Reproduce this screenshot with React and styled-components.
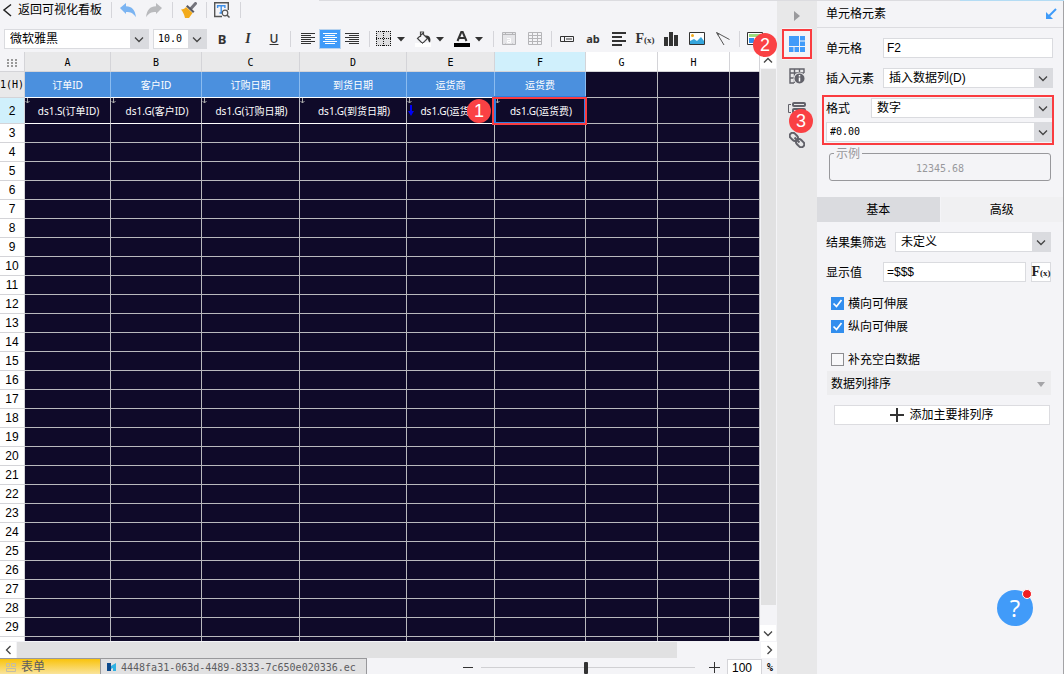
import React from "react";
import styled, { createGlobalStyle, css } from "styled-components";

const ui = `"Liberation Sans", "Noto Sans CJK SC", sans-serif`;
const mono = `"DejaVu Sans Mono", "Noto Sans CJK SC", monospace`;
const cellFont = `"Noto Sans", "Noto Sans CJK SC", sans-serif`;

const Global = createGlobalStyle`
  *, *::before, *::after { box-sizing: border-box; }
  body { margin: 0; background: #f4f4f7; color: #000; font: 12px/18px ${ui}; }
  button, input, select { font: inherit; color: inherit; margin: 0; }
  button { border: 0; padding: 0; background: none; }
  svg { display: block; }
`;

const App_ = styled.div`
  position: relative;
  display: flex;
  height: 100vh;
  overflow: hidden;
  &::before {
    content: "";
    position: absolute;
    z-index: 5;
    top: 0;
    right: 0;
    left: 30%;
    height: 1px;
    background: linear-gradient(to right, #dcdce0 86%, #b4dcf4 86%);
  }
`;
const Main = styled.main`
  flex: 1;
  min-width: 0;
  display: flex;
  flex-direction: column;
`;

/* Toolbars */
const TopBar = styled.header`
  display: flex;
  align-items: center;
  height: 20px;
  margin-bottom: 6px;
  flex: none;
`;
const Back = styled.button`
  display: flex;
  align-items: center;
  gap: 6px;
  padding: 0 6px 0 2px;
`;
const ToolBar = styled.div`
  display: flex;
  align-items: center;
  height: 26px;
  flex: none;
  padding-left: 4px;
  overflow: hidden;
`;
const Divider = styled.i`
  flex: none;
  width: 1px;
  height: 16px;
  margin: 0 2px 0 3px;
  background: #d5d5da;
`;
const Group = styled.div`
  display: flex;
  align-items: center;
  flex: none;
  padding: ${(p) => p.$pad || "0"};
`;
const Tool = styled.button`
  display: flex;
  align-items: center;
  justify-content: center;
  flex: none;
  width: ${(p) => p.$w || 26}px;
  height: 20px;
  color: #333;
  font: ${(p) => p.$font || "inherit"};
  ${(p) => p.$active && css`
    background: #3f9bf9;
    border: 1px solid #b9d3ee;
    color: #fff;
  `}
`;
const SplitTool = styled.button`
  display: flex;
  align-items: center;
  gap: 5px;
  flex: none;
  width: 39px;
  height: 20px;
  padding-left: 3px;
`;

/* Form parts */
const SelectBox = styled.span`
  position: relative;
  display: block;
  flex: ${(p) => (p.$w ? "none" : "1")};
  width: ${(p) => (p.$w ? p.$w + "px" : "auto")};
  min-width: 0;
  height: 20px;
  background: #dadbdf;
  select {
    appearance: none;
    display: block;
    width: 100%;
    height: 20px;
    padding: 0 22px 0 ${(p) => p.$indent || 5}px;
    border: 1px solid #dadbdf;
    border-radius: 0;
    background: linear-gradient(#fff, #fff) no-repeat 0 0 / calc(100% - 18px) 100%;
    background-color: #dadbdf;
    font: ${(p) => (p.$mono ? `10px/18px ${mono}` : "inherit")};
  }
  svg {
    position: absolute;
    top: 7px;
    right: 5px;
    pointer-events: none;
  }
`;
const TextInput = styled.input`
  flex: 1;
  min-width: 0;
  height: 20px;
  padding: 0 3px;
  border: 1px solid #dadbdf;
  background: #fff;
`;

/* Spreadsheet */
const SheetArea = styled.div`
  flex: 1;
  min-height: 0;
  display: flex;
`;
const SheetView = styled.div`
  flex: 1;
  min-width: 0;
  overflow: hidden;
  background: #0f0a29;
`;
const Sheet = styled.table`
  width: 100%;
  table-layout: fixed;
  border-collapse: separate;
  border-spacing: 0;
`;
const ColHead = styled.th`
  height: 20px;
  padding: 2px 0 0;
  border-right: 1px solid #d4d4d8;
  border-bottom: 1px solid #d4d4d8;
  background: ${(p) => p.$bg || "#e9e9ea"};
  font: 10px/17px ${mono};
`;
const Dots = styled.div`
  display: flex;
  justify-content: center;
`;
const RowHead = styled.th`
  height: ${(p) => p.$h || 19}px;
  padding: 0;
  border-right: 1px solid #d4d4d8;
  border-bottom: 1px solid #d4d4d8;
  background: ${(p) => p.$bg || "#fff"};
  font: ${(p) => (p.$mono ? `10px/18px ${mono}` : `12px/18px ${ui}`)};
  white-space: nowrap;
`;
const Cell = styled.td`
  position: relative;
  height: ${(p) => p.$h || 19}px;
  padding: 0;
  border-right: 1px solid #b9b9bd;
  border-bottom: 1px solid #b9b9bd;
  color: #fff;
  text-align: center;
  white-space: nowrap;
  font: 10px/18px ${cellFont};
  ${(p) => p.$head && css`
    background: #4b90de;
    border-right-color: #8bbcf0;
    border-bottom-color: #fff;
  `}
  ${(p) => p.$formula && css`
    padding-left: 2px;
    border-bottom-color: #fff;
  `}
`;
const Anchor = styled.svg`
  position: absolute;
  top: 0;
  left: 0;
`;
const BlueAnchor = styled.svg`
  position: absolute;
  top: 7px;
  left: 0;
`;
const Selection = styled.span`
  position: absolute;
  inset: -2px -1px -1px -1px;
  border: 2px solid #2f7fe0;
`;
const Mark = styled.span`
  position: absolute;
  z-index: 2;
  inset: ${(p) => p.$inset};
  border: 2px solid #fa3c40;
  pointer-events: none;
`;
const Badge = styled.span`
  position: absolute;
  z-index: 3;
  top: ${(p) => p.$top}px;
  left: ${(p) => p.$left}px;
  width: 24px;
  height: 24px;
  border-radius: 50%;
  background: #fa4144;
  color: #fff;
  text-align: center;
  font: 18px/24px "Liberation Sans", sans-serif;
`;

/* Scroll bars and status line */
const VScroll = styled.div`
  flex: none;
  width: 17px;
  display: flex;
  flex-direction: column;
`;
const HScroll = styled.div`
  flex: none;
  height: 17px;
  display: flex;
  padding-top: 1px;
`;
const ScrollButton = styled.button`
  display: flex;
  align-items: center;
  justify-content: center;
  flex: none;
  width: 16px;
  height: 16px;
  background: #fff;
`;
const Thumb = styled.div`
  flex: ${(p) => p.$grow};
  margin: ${(p) => p.$margin || 0};
  background: #e1e1e2;
`;
const Rest = styled.div`
  flex: ${(p) => p.$grow};
`;
const StatusBar = styled.footer`
  flex: none;
  display: flex;
  height: 16px;
  overflow: hidden;
`;
const SheetTab = styled.button`
  display: flex;
  align-items: center;
  gap: 5px;
  flex: none;
  height: 17px;
  padding: 0 ${(p) => (p.$active ? 55 : 10)}px 0 6px;
  border: solid #98989b;
  border-width: 1px 1px 0 0;
  background: ${(p) => (p.$active ? "linear-gradient(#f9c30c, #fae6a4)" : "#e1e1e2")};
  color: #5c5c5f;
  font: ${(p) => (p.$active ? `12px/15px ${ui}` : `10px/15px ${mono}`)};
`;
const Zoom = styled.div`
  flex: 1;
  display: flex;
  align-items: center;
  justify-content: flex-end;
  padding: 3px 4px 0 0;
`;
const ZoomRange = styled.input`
  appearance: none;
  width: 214px;
  height: 12px;
  margin: 0 8px;
  background: linear-gradient(#d0d0d3, #d0d0d3) no-repeat center / 100% 1px;
  &::-webkit-slider-thumb {
    appearance: none;
    width: 4px;
    height: 12px;
    border-radius: 1px;
    background: #333;
  }
`;
const ZoomInput = styled.input`
  width: 35px;
  height: 18px;
  margin: 0 5px 0 7px;
  padding: 0 4px;
  border: 1px solid #d4d4d8;
  background: #fff;
`;
const Percent = styled.label`
  font: bold 10px/12px ${mono};
`;

/* Icon strip */
const Strip = styled.nav`
  flex: none;
  width: 40px;
  display: flex;
  flex-direction: column;
  align-items: center;
  padding-top: 3px;
  background: #e8e8e9;
`;
const StripButton = styled.button`
  position: relative;
  display: flex;
  align-items: center;
  justify-content: center;
  flex: none;
  width: 30px;
  height: ${(p) => p.$h || 32}px;
  background: ${(p) => (p.$active ? "#f4f4f7" : "none")};
`;

/* Property panel */
const Panel = styled.aside`
  position: relative;
  flex: none;
  width: 247px;
  background: #f4f4f7;
  border-right: 1px solid #a3a3a6;
`;
const PanelTitle = styled.h1`
  display: flex;
  align-items: center;
  justify-content: space-between;
  height: 28px;
  margin: 0 0 10px;
  padding: 1px 6px 0 9px;
  border-bottom: 1px solid #dcdce0;
  font: 12px/18px ${ui};
`;
const Field = styled.div`
  display: flex;
  align-items: center;
  height: 20px;
  margin: 0 ${(p) => p.$right || 10}px 10px 9px;
`;
const FieldLabel = styled.label`
  flex: none;
  width: ${(p) => p.$w || 57}px;
  padding-top: 2px;
  white-space: nowrap;
`;
const FormatGroup = styled.div`
  position: relative;
  display: grid;
  gap: 4px;
  margin-bottom: 5px;
`;
const FormatRow = styled.div`
  display: flex;
  align-items: center;
  height: 20px;
  margin: 0 10px 0 9px;
`;
const Sample = styled.fieldset`
  height: 34px;
  margin: 0 12px 16px;
  padding: 0;
  border: 1px solid #98989c;
  border-radius: 3px;
  color: #98989c;
  text-align: center;
  font: 10px/18px ${mono};
  legend {
    height: 13px;
    margin-left: 4px;
    padding: 0 2px;
    text-align: left;
    font: 12px/14px ${ui};
  }
`;
const Tabs = styled.div`
  display: flex;
  gap: 1px;
  margin-bottom: 10px;
`;
const Tab = styled.button`
  flex: 1;
  height: 25px;
  background: ${(p) => (p.$active ? "#dadbdf" : "#f0f0f2")};
`;
const FxButton = styled.button`
  display: flex;
  align-items: center;
  justify-content: center;
  flex: none;
  width: 20px;
  height: 20px;
  margin-left: 5px;
  border: 1px solid #dadbdf;
  background: #fff;
  color: #222;
`;
const Check = styled.label`
  display: flex;
  align-items: center;
  gap: 4px;
  height: 23px;
  margin-left: 14px;
  input {
    appearance: none;
    width: 13px;
    height: 13px;
    border: 1px solid #8c8c90;
    background: #f8f8fa;
  }
  input:checked {
    border-color: #328eee;
    background: #328eee
      url("data:image/svg+xml,%3Csvg xmlns='http://www.w3.org/2000/svg' viewBox='0 0 11 11'%3E%3Cpath d='M1.500 5.500l3 3 5-6.500' fill='none' stroke='white' stroke-width='1.700'/%3E%3C/svg%3E");
  }
`;
const Checks = styled.div`
  margin-bottom: 10px;
`;
const Section = styled.button`
  display: flex;
  align-items: center;
  justify-content: space-between;
  width: calc(100% - 22px);
  height: 24px;
  margin: 0 12px 10px 10px;
  padding: 2px 6px 0 4px;
  background: #ededef;
`;
const AddButton = styled.button`
  display: flex;
  align-items: center;
  justify-content: center;
  gap: 5px;
  width: calc(100% - 30px);
  height: 20px;
  margin-left: 17px;
  border: 1px solid #dcdce0;
  background: #fff;
`;
const Help = styled.button`
  position: absolute;
  right: 30px;
  bottom: 48px;
  width: 36px;
  height: 36px;
  border-radius: 50%;
  background: #419bf9;
  color: #fff;
  font: 24px/36px "Open Sans", sans-serif;
  &::after {
    content: "";
    position: absolute;
    top: -1px;
    right: 1px;
    width: 10px;
    height: 10px;
    border: 1px solid #fff;
    border-radius: 50%;
    background: #f01d22;
  }
`;

/* Icons */
const Svg = ({ w = 16, h = 16, children, ...rest }) => (
  <svg width={w} height={h} viewBox={`0 0 ${w} ${h}`} fill="none" aria-hidden="true" {...rest}>{children}</svg>
);
const chevrons = {
  down: { w: 10, h: 7, d: "M1 1.5l4 4 4-4" },
  up: { w: 10, h: 7, d: "M1 5.5l4-4 4 4" },
  left: { w: 7, h: 10, d: "M5.5 1l-4 4 4 4" },
  right: { w: 7, h: 10, d: "M1.5 1l4 4-4 4" },
};
const Chevron = ({ dir = "down" }) => {
  const { w, h, d } = chevrons[dir];
  return <Svg w={w} h={h}><path d={d} stroke="#444" strokeWidth="1.3" /></Svg>;
};
const Caret = () => <Svg w={8} h={5}><path d="M0 0h8L4 4.5z" fill="#333" /></Svg>;
const Lines = ({ rows }) => (
  <Svg w={16} h={14}>
    {rows.map(([x1, x2], i) => <path key={i} d={`M${x1} ${1.5 + i * 2}H${x2}`} stroke="currentColor" />)}
  </Svg>
);
const alignLeft = [[1, 15], [1, 11], [1, 15], [1, 11], [1, 15], [1, 11]];
const alignCenter = [[1, 15], [3, 13], [1, 15], [3, 13], [1, 15], [3, 13]];
const alignRight = [[1, 15], [5, 15], [1, 15], [5, 15], [1, 15], [5, 15]];
const FxText = styled.span`
  font: bold 14px/18px "Liberation Serif", serif;
  small { font: bold 9px/18px "Liberation Serif", serif; }
`;
const Fx = () => <FxText>F<small>(x)</small></FxText>;

const Select = ({ label, id, value, ...rest }) => (
  <SelectBox {...rest}>
    <select id={id} aria-label={label} defaultValue={value}><option>{value}</option></select>
    <Chevron />
  </SelectBox>
);

const columns = [
  { name: "A", width: 86, title: "订单ID", formula: "ds1.S(订单ID)" },
  { name: "B", width: 91, title: "客户ID", formula: "ds1.G(客户ID)" },
  { name: "C", width: 98, title: "订购日期", formula: "ds1.G(订购日期)" },
  { name: "D", width: 107, title: "到货日期", formula: "ds1.G(到货日期)" },
  { name: "E", width: 88, title: "运货商", formula: "ds1.G(运货商)" },
  { name: "F", width: 91, title: "运货费", formula: "ds1.G(运货费)" },
  { name: "G", width: 72 },
  { name: "H", width: 72 },
  { name: "" },
];
const lastRow = 29;
const rows = Array.from({ length: lastRow - 1 }, (_, i) => i + 3);

const Spreadsheet = () => (
  <Sheet>
    <colgroup>
      <col width="25" />
      {columns.map((c) => <col key={c.name} width={c.width} />)}
    </colgroup>
    <thead>
      <tr>
        <ColHead $bg="#f4f4f7">
          <Dots>
            <Svg w={10} h={8}>
              {[0, 4, 8].flatMap((x) => [0, 3, 6].map((y) => <rect key={`${x}-${y}`} x={x} y={y} width="2" height="2" fill="#999" />))}
            </Svg>
          </Dots>
        </ColHead>
        {columns.map((c) => (
          <ColHead key={c.name} $bg={c.name === "F" ? "#d0f0fc" : c.title ? "#e9e9ea" : "#fff"}>{c.name}</ColHead>
        ))}
      </tr>
    </thead>
    <tbody>
      <tr>
        <RowHead $h={26} $bg="#e9e9ea" $mono>1(H)</RowHead>
        {columns.map((c) => <Cell key={c.name} $h={26} $head={Boolean(c.title)}>{c.title}</Cell>)}
      </tr>
      <tr>
        <RowHead $h={26} $bg="#d0f0fc">2</RowHead>
        {columns.map((c) => (
          <Cell key={c.name} $h={26} $formula={Boolean(c.formula)}>
            {c.formula}
            {c.formula && (
              <Anchor width="5" height="6" viewBox="0 0 5 6" fill="none" stroke="#aaa"><path d="M2.5 0v5M.5 3l2 2 2-2" /></Anchor>
            )}
            {c.name === "E" && (
              <BlueAnchor width="7" height="12" viewBox="0 0 7 12"><path d="M3 0h2v6h2L4 11 1 6h2z" fill="#0000f5" /></BlueAnchor>
            )}
            {c.name === "F" && <><Selection /><Mark $inset="-1px -2px -2px -3px" /><Badge $top={1} $left={-28}>1</Badge></>}
          </Cell>
        ))}
      </tr>
      {rows.map((n) => (
        <tr key={n}>
          <RowHead>{n <= lastRow ? n : null}</RowHead>
          {columns.map((c) => <Cell key={c.name} />)}
        </tr>
      ))}
    </tbody>
  </Sheet>
);

export default function App() {
  return (
    <App_>
      <Global />
      <Main>
        <TopBar>
          <Back>
            <Svg w={10} h={14}><path d="M9 1.5L2 7l7 6" stroke="#222" strokeWidth="1.5" /></Svg>
            返回可视化看板
          </Back>
          <Divider />
          <Group $pad="0 2px 0 1px">
            <Tool aria-label="撤销">
              <Svg><path d="M0 6l6-5v3.200c6 0 9 3.500 10 11-3-4-5-5.200-10-5.200V12z" fill="#7bb4f2" /></Svg>
            </Tool>
            <Tool aria-label="重做">
              <Svg><path d="M16 6l-6-5v3.200c-6 0-9 3.500-10 11 3-4 5-5.200 10-5.200V12z" fill="#b9babd" /></Svg>
            </Tool>
          </Group>
          <Divider />
          <Group $pad="0 1px">
            <Tool aria-label="格式刷">
              <Svg>
                <path d="M14.500 1.500L10 6.500" stroke="#74747c" strokeWidth="3" strokeLinecap="round" />
                <path d="M6.500 3l7 6.500-1.500 1.500L5 4.500z" fill="#5a5a62" />
                <path d="M5 5l6.500 6L8 16H4C3 12 2 10 0 7.500 2.500 7.500 4 6.500 5 5z" fill="#f3ab1c" />
              </Svg>
            </Tool>
          </Group>
          <Divider />
          <Group $pad="0 2px 0 0">
            <Tool aria-label="预览">
              <Svg>
                <path d="M8 14.500H.7V.7h13.600V8" stroke="#555" strokeWidth="1.400" />
                <path d="M3 3.700h8.500M7.200 3.500v7.500M5.500 11h3.500M3.600 3v3M10.900 3v3" stroke="#3f8fe8" strokeWidth="1.400" />
                <circle cx="11" cy="11" r="2.800" stroke="#555" strokeWidth="1.200" fill="#f4f4f7" /><path d="M13 13l2.500 2.500" stroke="#555" strokeWidth="1.500" />
              </Svg>
            </Tool>
          </Group>
          <Divider />
        </TopBar>

        <ToolBar>
          <Group $pad="0 2px 0 0">
            <Select label="字体" value="微软雅黑" $w={145} />
            <Group $pad="0 0 0 4px"><Select label="字号" value="10.0" $w={54} $mono $indent={4} /></Group>
          </Group>
          <Tool $font={`bold 13px/18px "Noto Sans", sans-serif`}>B</Tool>
          <Tool $font={`italic bold 14px/18px "Liberation Serif", serif`}>I</Tool>
          <Tool $font={`600 12px/18px "Open Sans", sans-serif`}><u>U</u></Tool>
          <Divider />
          <Group $pad="0 3px 0 4px">
            <Tool $w={22} aria-label="左对齐"><Lines rows={alignLeft} /></Tool>
            <Tool $w={22} $active aria-label="居中"><Lines rows={alignCenter} /></Tool>
            <Tool $w={22} aria-label="右对齐"><Lines rows={alignRight} /></Tool>
          </Group>
          <Divider />
          <Group $pad="0 0 0 1px">
            <SplitTool aria-label="边框">
              <Svg>
                <path fill="#dedee0" d="M0 0h15v15H0z" />
                <path d="M0 .5h15M0 14.500h15M0 7.500h15M.5 0v15M14.500 0v15M7.500 0v15" stroke="#111" strokeDasharray="1 1" />
              </Svg>
              <Caret />
            </SplitTool>
            <SplitTool aria-label="背景色">
              <Svg>
                <path d="M2.500 7.500l5-5 5 5-5 5zM5.500 6V1h3v3" stroke="#444" strokeWidth="1.200" />
                <path d="M10 4.500c4-.5 6.500 2 5 7-2-1-1.500-2.500-2.500-4z" fill="#333" />
                <path fill="#fff" d="M0 12h16v4H0z" />
                <path d="M6 11l1.500 1.500L9 11" stroke="#444" />
              </Svg>
              <Caret />
            </SplitTool>
            <SplitTool aria-label="文字颜色">
              <Svg>
                <path d="M3.500 10L7.300 1h1.400l3.800 9M5 7h6" stroke="#333" strokeWidth="2" />
                <path fill="#000" d="M0 12h16v4H0z" />
              </Svg>
              <Caret />
            </SplitTool>
          </Group>
          <Divider />
          <Tool aria-label="合并单元格">
            <Svg>
              <path d="M1.500 1.500h13v12h-13z" fill="#e6e6e9" stroke="#b5b5b8" />
              <path d="M1.500 3.500h13M4.500 1.500v2M11.500 1.500v2M4.500 13.500v-1M11.500 13.500v-1" stroke="#b5b5b8" />
              <path d="M6 7.500h3.500v4M9.500 9.500H6.500v2h3" stroke="#fff" />
            </Svg>
          </Tool>
          <Tool aria-label="取消合并">
            <Svg><path d="M1.500 1.500h13v12h-13zM1.500 4.500h13M1.500 7.500h13M1.500 10.500h13M5.500 1.500v12M10.500 1.500v12" stroke="#b5b5b8" /></Svg>
          </Tool>
          <Divider />
          <Tool aria-label="控件">
            <Svg w={14} h={6}><path d="M.5 .5h13v5H.5zM4.500 .5v5M6 3h6" stroke="#333" /></Svg>
          </Tool>
          <Tool $font={`bold 11px/18px "Noto Sans", sans-serif`}>ab</Tool>
          <Tool aria-label="富文本">
            <Svg><path d="M1 2h14M1 6h10M1 10h14M1 14h10" stroke="#333" strokeWidth="2" /></Svg>
          </Tool>
          <Tool aria-label="公式"><Fx /></Tool>
          <Tool aria-label="图表">
            <Svg><path d="M1 6h4v9H1zM6 1h4v14H6zM11 4h4v11h-4z" fill="#333" /></Svg>
          </Tool>
          <Tool aria-label="图片">
            <Svg>
              <path d="M.5 1.500h15v12H.5z" fill="#fff" stroke="#333" />
              <circle cx="3.500" cy="4.500" r="1.500" fill="#f3ab1c" />
              <path d="M1 13v-3l4-2 3 2 4-4 3 4v3z" fill="#35a5dc" />
            </Svg>
          </Tool>
          <Tool aria-label="斜线">
            <Svg><path d="M1.500 1.500l13 7M1.500 1.500L9 14" stroke="#555" /><path d="M1.500 1.500l3 1 -1.500 2z" fill="#555" /></Svg>
          </Tool>
          <Divider />
          <Tool aria-label="子报表">
            <Svg>
              <path d="M.5 1.500h15v12H.5z" fill="#fff" stroke="#333" />
              <path d="M2 3h12v3H2z" fill="#9bdc7e" /><path d="M2 7h5v5H2z" fill="#2f8df0" /><path d="M8 7h6v5H8z" fill="#f3ab1c" />
            </Svg>
          </Tool>
        </ToolBar>

        <SheetArea>
          <SheetView><Spreadsheet /></SheetView>
          <VScroll>
            <ScrollButton aria-label="向上"><Chevron dir="up" /></ScrollButton>
            <Thumb $grow={536} $margin="1px 1px 0 1px" />
            <Rest $grow={20} />
            <ScrollButton aria-label="向下"><Chevron /></ScrollButton>
          </VScroll>
        </SheetArea>
        <HScroll>
          <ScrollButton aria-label="向左"><Chevron dir="left" /></ScrollButton>
          <Thumb $grow={660} $margin="0 0 0 1px" />
          <Rest $grow={84} />
          <ScrollButton aria-label="向右"><Chevron dir="right" /></ScrollButton>
        </HScroll>
        <StatusBar>
          <SheetTab $active>
            <Svg w={10} h={9}><path d="M.5 .5h3v3h-3zM5.500 .5h4v3h-4zM.5 5.500h9v3h-9z" stroke="#c3bda6" /></Svg>
            表单
          </SheetTab>
          <SheetTab>
            <Svg w={9} h={8}><path d="M0 0h4v8H0z" fill="#0d4a8c" /><path d="M4 3l5-3v8H6V5L4 6z" fill="#2fb1e3" /></Svg>
            4448fa31-063d-4489-8333-7c650e020336.ec
          </SheetTab>
          <Zoom>
            <button aria-label="缩小"><Svg w={10} h={11}><path d="M0 5.500h10" stroke="#333" /></Svg></button>
            <ZoomRange type="range" min="0" max="100" defaultValue="49" aria-label="缩放" />
            <Group $pad="0 0 0 6px"><button aria-label="放大"><Svg w={11} h={11}><path d="M0 5.500h11M5.500 0v11" stroke="#333" /></Svg></button></Group>
            <ZoomInput id="zoom" defaultValue="100" />
            <Percent htmlFor="zoom">%</Percent>
          </Zoom>
        </StatusBar>
      </Main>

      <Strip>
        <StripButton $h={25} aria-label="收起"><Svg w={6} h={10}><path d="M0 0l6 5-6 5z" fill="#9a9a9d" /></Svg></StripButton>
        <StripButton $active aria-label="单元格元素">
          <Svg>
            <path d="M0 0h10v10H0zM11 0h5v4.500h-5zM11 5.500h5V10h-5zM0 11h4.500v5H0zM5.500 11H10v5H5.500zM11 11h5v5h-5z" fill="#419bf9" />
          </Svg>
          <Mark $inset="1px 0" /><Badge $top={5} $left={-29}>2</Badge>
        </StripButton>
        <StripButton aria-label="单元格属性">
          <Svg>
            <path d="M15 5V1H1v14h4M1 5h14M5.500 1v14M10.500 1v4M1 10h5" stroke="#62626a" strokeWidth="1.400" />
            <circle cx="10.500" cy="10.500" r="6" fill="#e8e8e9" />
            <circle cx="10.500" cy="10.500" r="5" fill="#62626a" /><path d="M10.500 9.500v4M10.500 7v1.500" stroke="#fff" strokeWidth="1.500" />
          </Svg>
        </StripButton>
        <StripButton aria-label="悬浮元素">
          <Svg w={18}>
            <path d="M3 4.500H.5v8H3" stroke="#62626a" />
            <rect x="5" y="3" width="12" height="3" rx="1" stroke="#62626a" strokeWidth="2" />
            <rect x="5" y="9" width="12" height="4" rx="1" stroke="#62626a" strokeWidth="2" />
          </Svg>
        </StripButton>
        <StripButton aria-label="超级链接">
          <Svg>
            <g stroke="#62626a" strokeWidth="2" transform="rotate(45 8 8)">
              <rect x="-1" y="5" width="9" height="6" rx="3" /><rect x="8" y="5" width="9" height="6" rx="3" /><path d="M4.500 8h7" />
            </g>
          </Svg>
        </StripButton>
      </Strip>

      <Panel>
        <PanelTitle>
          单元格元素
          <Svg w={12} h={12}><path d="M11 1L4 8" stroke="#3f9bf9" strokeWidth="2" /><path d="M1 4v7h7z" fill="#3f9bf9" /></Svg>
        </PanelTitle>
        <Field>
          <FieldLabel htmlFor="cell">单元格</FieldLabel>
          <TextInput id="cell" defaultValue="F2" />
        </Field>
        <Field>
          <FieldLabel htmlFor="insert">插入元素</FieldLabel>
          <Select id="insert" value="插入数据列(D)" />
        </Field>
        <FormatGroup>
          <FormatRow>
            <FieldLabel htmlFor="format" $w={45}>格式</FieldLabel>
            <Select id="format" value="数字" />
          </FormatRow>
          <FormatRow><Select label="格式样式" value="#0.00" $mono $indent={3} /></FormatRow>
          <Mark $inset="-3px 9px -3px 5px" /><Badge $top={11} $left={-28}>3</Badge>
        </FormatGroup>
        <Sample><legend>示例</legend>12345.68</Sample>
        <Tabs>
          <Tab $active>基本</Tab>
          <Tab>高级</Tab>
        </Tabs>
        <Field $right={12}>
          <FieldLabel htmlFor="filter" $w={69}>结果集筛选</FieldLabel>
          <Select id="filter" value="未定义" />
        </Field>
        <Field $right={12}>
          <FieldLabel htmlFor="shown">显示值</FieldLabel>
          <TextInput id="shown" defaultValue="=$$$" />
          <FxButton aria-label="公式"><Fx /></FxButton>
        </Field>
        <Checks>
          <Check><input type="checkbox" defaultChecked />横向可伸展</Check>
          <Check><input type="checkbox" defaultChecked />纵向可伸展</Check>
        </Checks>
        <Check><input type="checkbox" />补充空白数据</Check>
        <Section>
          数据列排序
          <Svg w={8} h={5}><path d="M0 0h8L4 5z" fill="#a5a5a8" /></Svg>
        </Section>
        <AddButton>
          <Svg w={14} h={14}><path d="M0 7h14M7 0v14" stroke="#333" strokeWidth="2" /></Svg>
          添加主要排列序
        </AddButton>
        <Help aria-label="帮助">?</Help>
      </Panel>
    </App_>
  );
}
